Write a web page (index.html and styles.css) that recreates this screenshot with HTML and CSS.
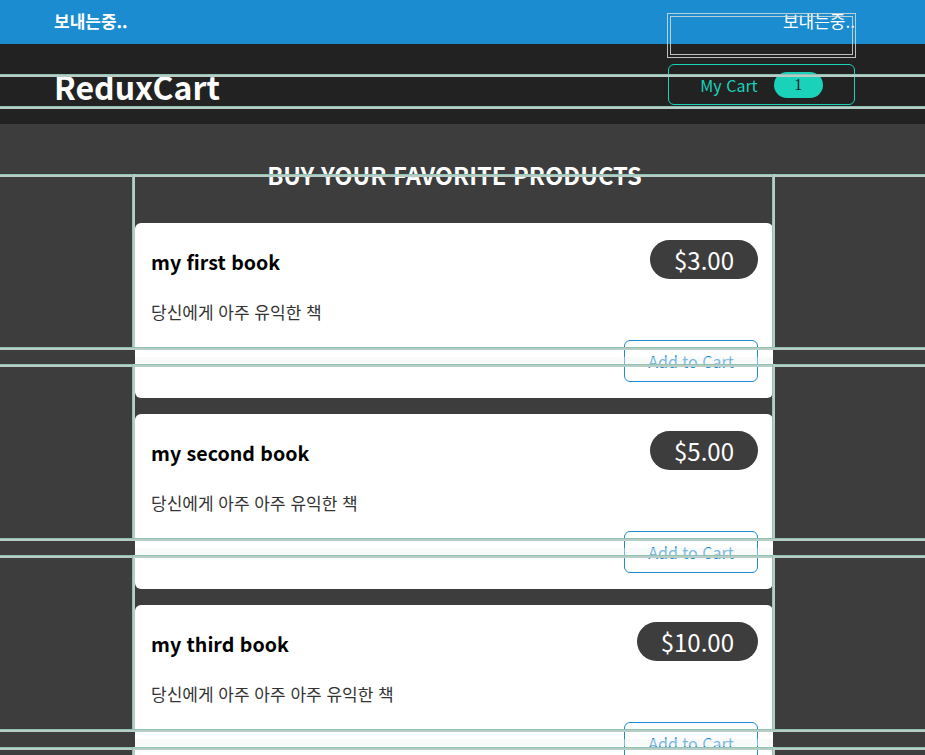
FILE: index.html
```html
<!DOCTYPE html>
<html lang="ko">
<head>
<meta charset="utf-8">
<title>ReduxCart</title>
<link rel="stylesheet" href="styles.css">
</head>
<body>
<div class="notice">
  <span class="notice-title">보내는중..</span>
  <span class="notice-msg">보내는중..</span>
</div>
<header class="header">
  <h1 class="logo">ReduxCart</h1>
  <button class="cart-btn"><span>My Cart</span><span class="badge">1</span></button>
</header>
<main class="main">
  <h2 class="heading">BUY YOUR FAVORITE PRODUCTS</h2>
  <ul class="products">
    <li class="card">
      <div class="card-top"><h3 class="title">my first book</h3><span class="price">$3.00</span></div>
      <p class="desc">당신에게 아주 유익한 책</p>
      <div class="actions"><button class="add-btn">Add to Cart</button></div>
    </li>
    <li class="card">
      <div class="card-top"><h3 class="title">my second book</h3><span class="price">$5.00</span></div>
      <p class="desc">당신에게 아주 아주 유익한 책</p>
      <div class="actions"><button class="add-btn">Add to Cart</button></div>
    </li>
    <li class="card">
      <div class="card-top"><h3 class="title">my third book</h3><span class="price">$10.00</span></div>
      <p class="desc">당신에게 아주 아주 아주 유익한 책</p>
      <div class="actions"><button class="add-btn">Add to Cart</button></div>
    </li>
  </ul>
</main>
<div class="overlay" aria-hidden="true">
  <div class="box"></div>
  <div class="band" style="top:357px"></div>
  <div class="band" style="top:548px"></div>
  <div class="band" style="top:739px"></div>
  <div class="hl" style="top:74px"></div>
  <div class="hl" style="top:106px"></div>
  <div class="hl" style="top:174px"></div>
  <div class="hl" style="top:347px"></div>
  <div class="hl" style="top:364px"></div>
  <div class="hl" style="top:538px"></div>
  <div class="hl" style="top:555px"></div>
  <div class="hl" style="top:729px"></div>
  <div class="hl" style="top:747px"></div>
  <div class="vl" style="left:132px;top:174px;height:173px"></div>
  <div class="vl" style="left:772px;top:174px;height:173px"></div>
  <div class="vl" style="left:132px;top:364px;height:174px"></div>
  <div class="vl" style="left:772px;top:364px;height:174px"></div>
  <div class="vl" style="left:132px;top:555px;height:174px"></div>
  <div class="vl" style="left:772px;top:555px;height:174px"></div>
  <div class="vl" style="left:132px;top:747px;height:40px"></div>
  <div class="vl" style="left:772px;top:747px;height:40px"></div>
</div>
</body>
</html>
```
FILE: styles.css
```css
* { box-sizing: border-box; }
html, body { margin: 0; padding: 0; }
body {
  font-family: "Noto Sans CJK KR", "Noto Sans", sans-serif;
  background: #3d3d3d;
  position: relative;
  min-height: 755px;
  overflow: hidden;
}
.notice {
  height: 44px;
  background: #1a8ccf;
  color: #fff;
  display: flex;
  justify-content: space-between;
  align-items: flex-start;
  padding: 9px 70px 0 54px;
  font-size: 17px;
  line-height: 24px;
}
.notice-title { font-weight: 700; }
.notice-msg { font-weight: 400; }
.header {
  height: 80px;
  background: #222;
  display: flex;
  justify-content: space-between;
  align-items: center;
  padding: 0 70px 0 54px;
}
.logo {
  margin: 4px 0 0;
  color: #fff;
  font-size: 32px;
  font-weight: 700;
  line-height: 40px;
}
.cart-btn {
  width: 187px;
  height: 41px;
  margin-top: 1px;
  background: transparent;
  border: 1px solid #1ad1b9;
  border-radius: 6px;
  color: #1ad1b9;
  font-family: inherit;
  font-size: 16px;
  display: flex;
  align-items: center;
  justify-content: center;
  gap: 16px;
  padding: 0;
}
.badge {
  display: inline-flex;
  align-items: center;
  justify-content: center;
  width: 49px;
  height: 26px;
  border-radius: 13px;
  background: #1ad1b9;
  color: #222;
  font-family: "Liberation Serif", serif;
  font-size: 16px;
}
.main {
  padding: 36px 0 0 135px;
}
.heading {
  margin: 0 0 0 -135px;
  width: 909px;
  text-align: center;
  color: #fff;
  font-size: 23.7px;
  font-weight: 700;
  line-height: 30px;
}
.products {
  list-style: none;
  margin: 33px 0 0;
  padding: 0;
  width: 638px;
  display: flex;
  flex-direction: column;
  gap: 16px;
}
.card {
  background: #fff;
  border-radius: 6px;
  height: 175px;
  padding: 16px 15px 16px 16px;
  display: flex;
  flex-direction: column;
}
.card-top {
  display: flex;
  justify-content: space-between;
  align-items: center;
  height: 40px;
}
.title {
  margin: 0;
  padding-top: 4px;
  font-size: 19.6px;
  font-weight: 700;
  color: #000;
}
.price {
  background: #3d3d3d;
  color: #fff;
  font-size: 24px;
  line-height: 39px;
  height: 39px;
  padding: 0 24px;
  border-radius: 20px;
}
.desc {
  margin: 0;
  padding-top: 21px;
  font-size: 17px;
  line-height: 24px;
  color: #333;
}
.actions {
  margin-top: auto;
  display: flex;
  justify-content: flex-end;
}
.add-btn {
  width: 134px;
  height: 42px;
  background: #fff;
  border: 1px solid #1a8ccf;
  border-radius: 6px;
  color: #1a8ccf;
  font-family: inherit;
  font-size: 16px;
  padding: 0;
}
.overlay {
  position: absolute;
  inset: 0;
  pointer-events: none;
}
.band {
  position: absolute;
  left: 135px;
  width: 638px;
  height: 7px;
  background: rgba(240, 242, 241, 0.45);
}
.hl {
  position: absolute;
  left: 0;
  right: 0;
  height: 3px;
  background: #b7cdc6;
  border-top: 1px solid #8fc2b2;
}
.vl {
  position: absolute;
  width: 3px;
  background: #b7cdc6;
  border-left: 1px solid #8fc2b2;
}
.box {
  position: absolute;
  left: 667px;
  top: 13px;
  width: 189px;
  height: 45px;
  border: 4px double rgba(215, 220, 218, 0.85);
}
```
